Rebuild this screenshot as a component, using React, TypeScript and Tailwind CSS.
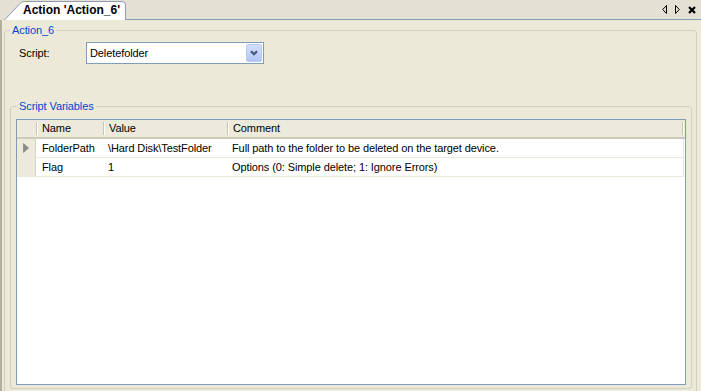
import React from 'react';

const rows = [
  { name: 'FolderPath', value: '\\Hard Disk\\TestFolder', comment: 'Full path to the folder to be deleted on the target device.', current: true },
  { name: 'Flag', value: '1', comment: 'Options (0: Simple delete; 1: Ignore Errors)', current: false },
];

function HeaderCell({ label, width }: { label: string; width: string }) {
  return (
    <div className={`${width} flex items-center h-full`}>
      <span className="w-px h-[13px] bg-[#c7c3b2]" />
      <span className="w-px h-[13px] bg-white" />
      <span className="pl-[4px] whitespace-nowrap">{label}</span>
    </div>
  );
}

function TabShape() {
  return (
    <svg className="absolute inset-0" width="122" height="19" viewBox="0 0 122 19">
      <path
        d="M0.5 19 L16 2.5 Q17.5 0.5 20 0.5 L118 0.5 Q121.5 0.5 121.5 4 L121.5 19"
        fill="#ffffff"
        stroke="#8b9bb8"
        strokeWidth="1"
      />
    </svg>
  );
}

export default function App() {
  return (
    <div className="w-[701px] h-[391px] overflow-hidden bg-[#ece9d8] flex flex-col font-['Liberation_Sans',Arial,sans-serif] text-[11px] tracking-[-0.1px] text-black">
      {/* document tab strip */}
      <div className="h-[20px] flex items-end bg-[#e4e1d4] shrink-0">
        <div className="relative w-[122px] h-[19px] ml-[4px]">
          <TabShape />
          <span className="relative block pl-[19px] leading-[19px] text-[12px] tracking-normal font-bold whitespace-nowrap">
            Action 'Action_6'
          </span>
        </div>
        <div className="flex-1 self-stretch border-b border-[#7f9db9] flex items-center justify-end pr-[5px]">
          <svg width="5" height="9" viewBox="0 0 5 9">
            <path d="M4.5 0.5 L0.7 4.5 L4.5 8.5 Z" fill="none" stroke="#000" strokeWidth="1" />
          </svg>
          <svg className="ml-[8px]" width="5" height="9" viewBox="0 0 5 9">
            <path d="M0.5 0.5 L4.3 4.5 L0.5 8.5 Z" fill="none" stroke="#000" strokeWidth="1" />
          </svg>
          <svg className="ml-[8px]" width="8" height="8" viewBox="0 0 8 8">
            <path d="M1 1 L7 7 M7 1 L1 7" stroke="#000" strokeWidth="2.2" />
          </svg>
        </div>
      </div>

      {/* panel body */}
      <div className="flex-1 border-l-2 border-[#b3af9d] pl-[2px] pt-[4px]">
        <fieldset className="w-[693px] h-[380px] border border-[#d0d0bf] rounded-[3px]">
          <legend className="ml-[5px] px-[2px] leading-[13px] text-[#0046d5]">Action_6</legend>

          <div className="mt-[5px] flex items-center h-[22px] pl-[14px]">
            <span className="w-[67px]">Script:</span>
            <div className="w-[178px] h-[22px] border border-[#7f9db9] bg-white flex items-center pl-[3px] pr-[1px]">
              <span>Deletefolder</span>
              <div className="ml-auto w-[16px] h-[18px] rounded-[2px] border border-[#b8c9f2] bg-gradient-to-b from-[#d2defd] to-[#b2c6f6] flex items-center justify-center">
                <svg width="8" height="6" viewBox="0 0 8 6">
                  <path d="M1 1.2 L4 4.2 L7 1.2" fill="none" stroke="#42557a" strokeWidth="2.2" />
                </svg>
              </div>
            </div>
          </div>

          <fieldset className="mt-[36px] ml-[5px] w-[682px] border border-[#d0d0bf] rounded-[3px] pt-[6px] px-[5px] pb-[3px]">
            <legend className="ml-[1px] px-[2px] leading-[13px] text-[#0046d5]">Script Variables</legend>

            <div className="h-[266px] border border-[#7f9db9] bg-white">
              {/* column headers */}
              <div className="h-[19px] flex bg-[#ebeadb] border-b-2 border-[#cfcbba]">
                <div className="w-[19px]" />
                <HeaderCell label="Name" width="w-[67px]" />
                <HeaderCell label="Value" width="w-[124px]" />
                <HeaderCell label="Comment" width="w-[455px]" />
                <div className="flex items-center h-full">
                  <span className="w-px h-[13px] bg-[#c7c3b2]" />
                  <span className="w-px h-[13px] bg-white" />
                </div>
              </div>

              {/* data rows */}
              {rows.map((r) => (
                <div key={r.name} className="w-[667px] h-[19px] flex border-b border-r border-[#ebe9da]">
                  <div className="w-[19px] bg-[#ebeadb] border-r border-[#d8d4c4] flex items-center justify-center">
                    {r.current && (
                      <svg width="6" height="10" viewBox="0 0 6 10">
                        <path d="M0.5 0.5 L5.5 5 L0.5 9.5 Z" fill="#8a8a86" stroke="#7a7a76" strokeWidth="0.6" />
                      </svg>
                    )}
                  </div>
                  <div className="w-[66px] pl-[6px] flex items-center whitespace-nowrap">{r.name}</div>
                  <div className="w-[124px] pl-[6px] flex items-center whitespace-nowrap">{r.value}</div>
                  <div className="flex-1 pl-[6px] flex items-center whitespace-nowrap">{r.comment}</div>
                </div>
              ))}
            </div>
          </fieldset>
        </fieldset>
      </div>
    </div>
  );
}
